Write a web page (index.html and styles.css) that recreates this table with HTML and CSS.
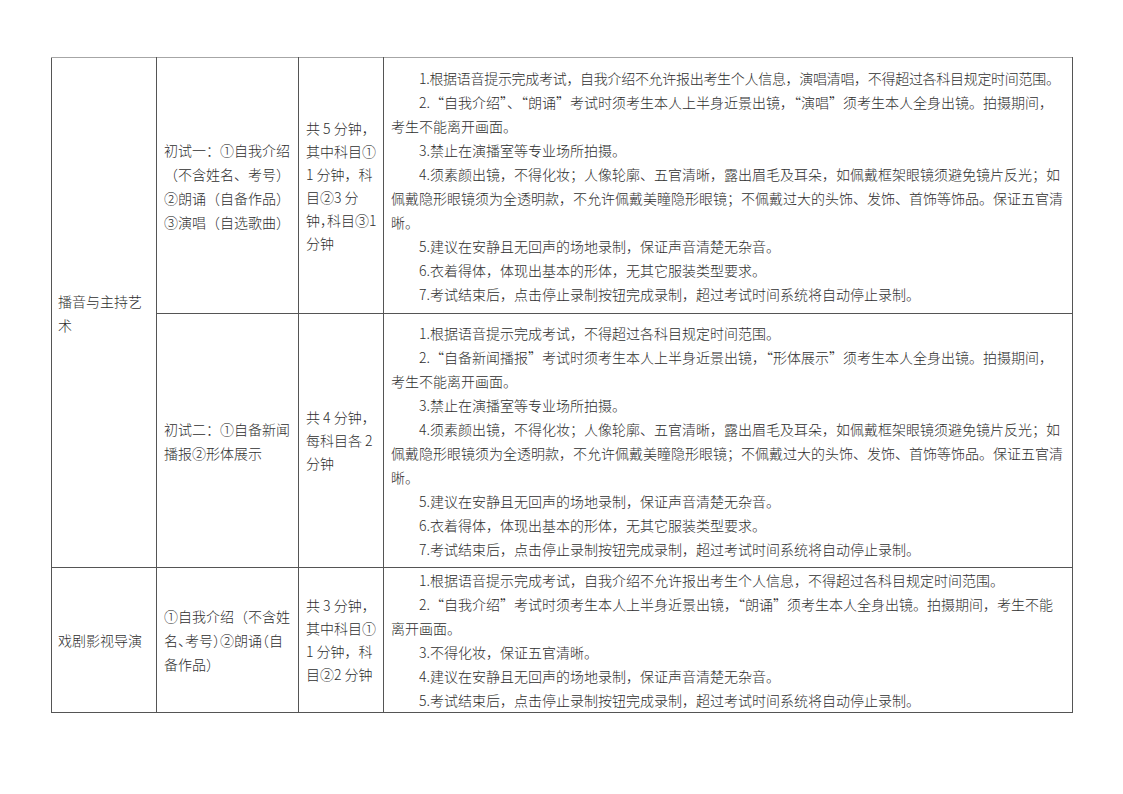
FILE: index.html
```html
<!DOCTYPE html>
<html lang="zh-CN">
<head>
<meta charset="utf-8">
<title>考试要求</title>
<link rel="stylesheet" href="styles.css">
</head>
<body>
<table class="grid">
  <colgroup>
    <col class="c1"><col class="c2"><col class="c3"><col class="c4">
  </colgroup>
  <tbody>
    <tr class="r1">
      <td class="major" rowspan="2">播音与主持艺<br>术</td>
      <td class="item">初试一：①自我介绍<br>（不含姓名、考号）<br>②朗诵（自备作品）<br>③演唱（自选歌曲）</td>
      <td class="time">共 5 分钟，<br>其中科目①<br>1 分钟，科<br>目②3 分<br>钟<span class="halt">，</span>科目③1<br>分钟</td>
      <td class="rules">
        <p class="tight">1.根据语音提示完成考试，自我介绍不允许报出考生个人信息，演唱清唱，不得超过各科目规定时间范围。</p>
        <p>2.“自我介绍”、“朗诵”考试时须考生本人上半身近景出镜，“演唱”须考生本人全身出镜。拍摄期间，考生不能离开画面。</p>
        <p>3.禁止在演播室等专业场所拍摄。</p>
        <p>4.须素颜出镜，不得化妆；人像轮廓、五官清晰，露出眉毛及耳朵，如佩戴框架眼镜须避免镜片反光；如佩戴隐形眼镜须为全透明款，不允许佩戴美瞳隐形眼镜；不佩戴过大的头饰、发饰、首饰等饰品。保证五官清晰。</p>
        <p>5.建议在安静且无回声的场地录制，保证声音清楚无杂音。</p>
        <p>6.衣着得体，体现出基本的形体，无其它服装类型要求。</p>
        <p>7.考试结束后，点击停止录制按钮完成录制，超过考试时间系统将自动停止录制。</p>
      </td>
    </tr>
    <tr class="r2">
      <td class="item">初试二：①自备新闻<br>播报②形体展示</td>
      <td class="time">共 4 分钟，<br>每科目各 2<br>分钟</td>
      <td class="rules">
        <p>1.根据语音提示完成考试，不得超过各科目规定时间范围。</p>
        <p>2.“自备新闻播报”考试时须考生本人上半身近景出镜，“形体展示”须考生本人全身出镜。拍摄期间，考生不能离开画面。</p>
        <p>3.禁止在演播室等专业场所拍摄。</p>
        <p>4.须素颜出镜，不得化妆；人像轮廓、五官清晰，露出眉毛及耳朵，如佩戴框架眼镜须避免镜片反光；如佩戴隐形眼镜须为全透明款，不允许佩戴美瞳隐形眼镜；不佩戴过大的头饰、发饰、首饰等饰品。保证五官清晰。</p>
        <p>5.建议在安静且无回声的场地录制，保证声音清楚无杂音。</p>
        <p>6.衣着得体，体现出基本的形体，无其它服装类型要求。</p>
        <p>7.考试结束后，点击停止录制按钮完成录制，超过考试时间系统将自动停止录制。</p>
      </td>
    </tr>
    <tr class="r3">
      <td class="major">戏剧影视导演</td>
      <td class="item">①自我介绍（不含姓<br>名<span class="halt">、</span>考号<span class="halt">）</span>②朗诵<span class="halt">（</span>自<br>备作品）</td>
      <td class="time">共 3 分钟，<br>其中科目①<br>1 分钟，科<br>目②2 分钟</td>
      <td class="rules">
        <p>1.根据语音提示完成考试，自我介绍不允许报出考生个人信息，不得超过各科目规定时间范围。</p>
        <p>2.“自我介绍”考试时须考生本人上半身近景出镜，“朗诵”须考生本人全身出镜。拍摄期间，考生不能离开画面。</p>
        <p>3.不得化妆，保证五官清晰。</p>
        <p>4.建议在安静且无回声的场地录制，保证声音清楚无杂音。</p>
        <p>5.考试结束后，点击停止录制按钮完成录制，超过考试时间系统将自动停止录制。</p>
      </td>
    </tr>
  </tbody>
</table>
</body>
</html>
```

FILE: styles.css
```css
html, body {
  margin: 0;
  padding: 0;
  background: #ffffff;
}

body {
  padding: 57px 0 0 51px;
  font-family: "Noto Sans CJK SC", "Noto Sans", sans-serif;
  font-weight: 300;
  font-size: 14px;
  line-height: 24px;
  color: #2e2e2e;
}

.grid {
  border-collapse: collapse;
  table-layout: fixed;
  width: 1021px;
}

.c1 { width: 105px; }
.c2 { width: 142px; }
.c3 { width: 85px; }
.c4 { width: 689px; }

.grid td {
  border: 1px solid #555555;
  padding: 0 6px;
  vertical-align: middle;
  white-space: nowrap;
}

.r1 td { border-top-color: #a6a6a6; }

.r1 { height: 256px; }
.r2 { height: 254px; }
.r3 { height: 144px; }

.grid td.item {
  padding-left: 7px;
}

.grid td.time {
  padding-left: 7px;
  line-height: 23px;
}

.grid td.rules {
  white-space: normal;
  padding: 0 7px;
}

.rules p {
  margin: 0;
  text-indent: 2em;
}

.rules p.tight {
  letter-spacing: -0.3px;
}

.halt {
  font-feature-settings: "halt";
}
```
